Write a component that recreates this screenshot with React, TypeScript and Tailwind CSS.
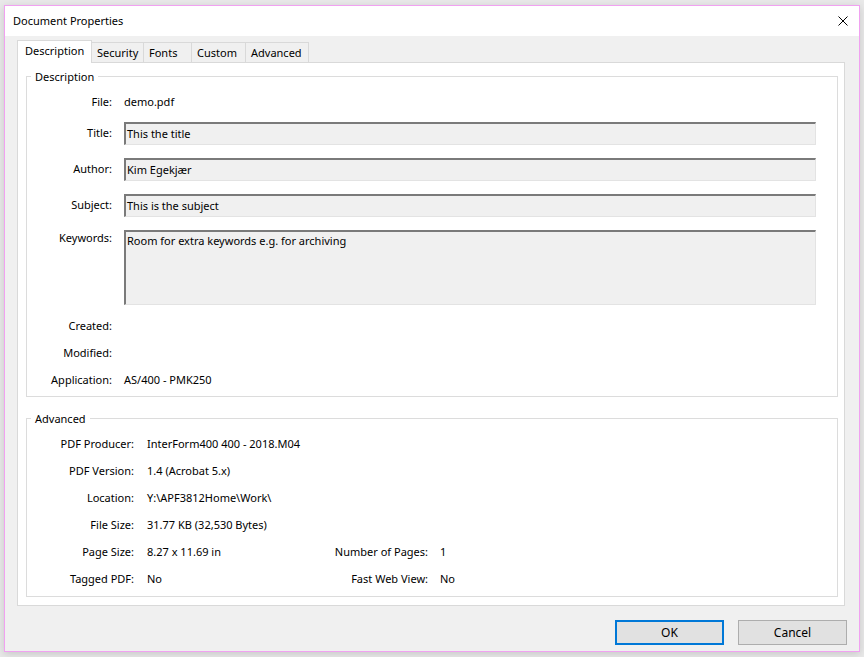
import React from "react";

const font = { fontFamily: '"Noto Sans", "Open Sans", Arial, sans-serif' };

function Field({ label, value, tall }: { label: string; value: string; tall?: boolean }) {
  return (
    <div className={`flex ${tall ? "items-start" : "items-center"}`}>
      <div className="w-[85px] shrink-0 text-right">{label}</div>
      <div
        className={`ml-[12px] flex-1 bg-[#f0f0f0] border-t-2 border-l-2 border-r border-b border-t-[#7a7a7a] border-l-[#7a7a7a] border-r-[#e3e3e3] border-b-[#e3e3e3] pl-[1px] ${
          tall ? "h-[75px] pt-[1px]" : "h-[23px] flex items-center"
        }`}
      >
        {value}
      </div>
    </div>
  );
}

function Info({ label, value, className = "" }: { label: string; value: string; className?: string }) {
  return (
    <div className={`flex items-center h-[20px] pt-[1px] ${className}`}>
      <div className="w-[85px] shrink-0 text-right">{label}</div>
      <div className="ml-[12px]">{value}</div>
    </div>
  );
}

function AdvRow({ l1, v1, l2, v2, className = "" }: { l1: string; v1: string; l2?: string; v2?: string; className?: string }) {
  return (
    <div className={`flex items-center h-[20px] pt-[1px] ${className}`}>
      <div className="w-[107px] shrink-0 text-right">{l1}</div>
      <div className="ml-[13px] w-[170px] shrink-0">{v1}</div>
      {l2 && <div className="w-[111px] shrink-0 text-right">{l2}</div>}
      {v2 && <div className="ml-[12px]">{v2}</div>}
    </div>
  );
}

function Group({ title, children, className = "" }: { title: string; children: React.ReactNode; className?: string }) {
  return (
    <div className={`relative border border-[#dcdcdc] ${className}`}>
      <span className="absolute -top-[8px] left-[4px] bg-white px-[4px] leading-[16px]">{title}</span>
      {children}
    </div>
  );
}

export default function App() {
  const tabs = ["Security", "Fonts", "Custom", "Advanced"];
  const tabW = ["w-[52px]", "w-[48px]", "w-[54px]", "w-[63px]"];

  return (
    <div className="w-[864px] h-[657px] bg-[#e9e9e9] pt-[5px] pl-[4px] text-[11px] text-black" style={font}>
      <div className="w-[856px] h-[647px] border border-[#f1a1f1] bg-[#f0f0f0] flex flex-col shadow-[0_2px_8px_rgba(0,0,0,0.15)]">
        {/* title bar */}
        <div className="h-[30px] bg-white flex items-center justify-between pl-[8px] pr-[10px]">
          <span className="pt-[1px]">Document Properties</span>
          <svg width="10" height="10" viewBox="0 0 10 10" className="mr-[1px]">
            <path d="M0.5 0.5 L9.5 9.5 M9.5 0.5 L0.5 9.5" stroke="#000" strokeWidth="1" />
          </svg>
        </div>

        <div className="flex-1 flex flex-col pt-[4px] pl-[12px] pr-[14px]">
          {/* tabs */}
          <div className="flex items-end h-[22px] relative z-10">
            <div className="w-[75px] h-[23px] -mb-[1px] bg-white border border-b-0 border-[#d9d9d9] flex items-center pl-[7px] pb-[1px]">
              Description
            </div>
            {tabs.map((t, i) => (
              <div
                key={t}
                className={`${tabW[i]} h-[20px] bg-[#f0f0f0] border border-b-0 border-l-0 border-[#d9d9d9] flex items-center pl-[5px] pt-[1px]`}
              >
                {t}
              </div>
            ))}
          </div>

          {/* panel */}
          <div className="bg-white border border-[#d9d9d9] pt-[13px] pl-[8px] pr-[6px] pb-[8px]">
            <Group title="Description" className="pt-[15px] pr-[21px] pb-[6px]">
              <Info label="File:" value="demo.pdf" />
              <div className="mt-[10px]">
                <Field label="Title:" value="This the title" />
              </div>
              <div className="mt-[13px]">
                <Field label="Author:" value="Kim Egekjær" />
              </div>
              <div className="mt-[13px]">
                <Field label="Subject:" value="This is the subject" />
              </div>
              <div className="mt-[13px]">
                <Field label="Keywords:" value="Room for extra keywords e.g. for archiving" tall />
              </div>
              <Info label="Created:" value="" className="mt-[11px]" />
              <Info label="Modified:" value="" className="mt-[7px]" />
              <Info label="Application:" value="AS/400 - PMK250" className="mt-[7px]" />
            </Group>

            <Group title="Advanced" className="mt-[21px] pt-[15px] pb-[7px]">
              <AdvRow l1="PDF Producer:" v1="InterForm400 400 - 2018.M04" />
              <AdvRow l1="PDF Version:" v1="1.4 (Acrobat 5.x)" className="mt-[7px]" />
              <AdvRow l1="Location:" v1="Y:\APF3812Home\Work\" className="mt-[7px]" />
              <AdvRow l1="File Size:" v1="31.77 KB (32,530 Bytes)" className="mt-[7px]" />
              <AdvRow l1="Page Size:" v1="8.27 x 11.69 in" l2="Number of Pages:" v2="1" className="mt-[7px]" />
              <AdvRow l1="Tagged PDF:" v1="No" l2="Fast Web View:" v2="No" className="mt-[7px]" />
            </Group>
          </div>

          {/* buttons */}
          <div className="flex justify-end gap-[14px] mt-[14px] -mr-[2px]">
            <button className="w-[109px] h-[25px] bg-[#e1e1e1] border-2 border-[#0078d7] text-[12px]">OK</button>
            <button className="w-[109px] h-[25px] bg-[#e1e1e1] border border-[#adadad] text-[12px]">Cancel</button>
          </div>
        </div>
      </div>
    </div>
  );
}
